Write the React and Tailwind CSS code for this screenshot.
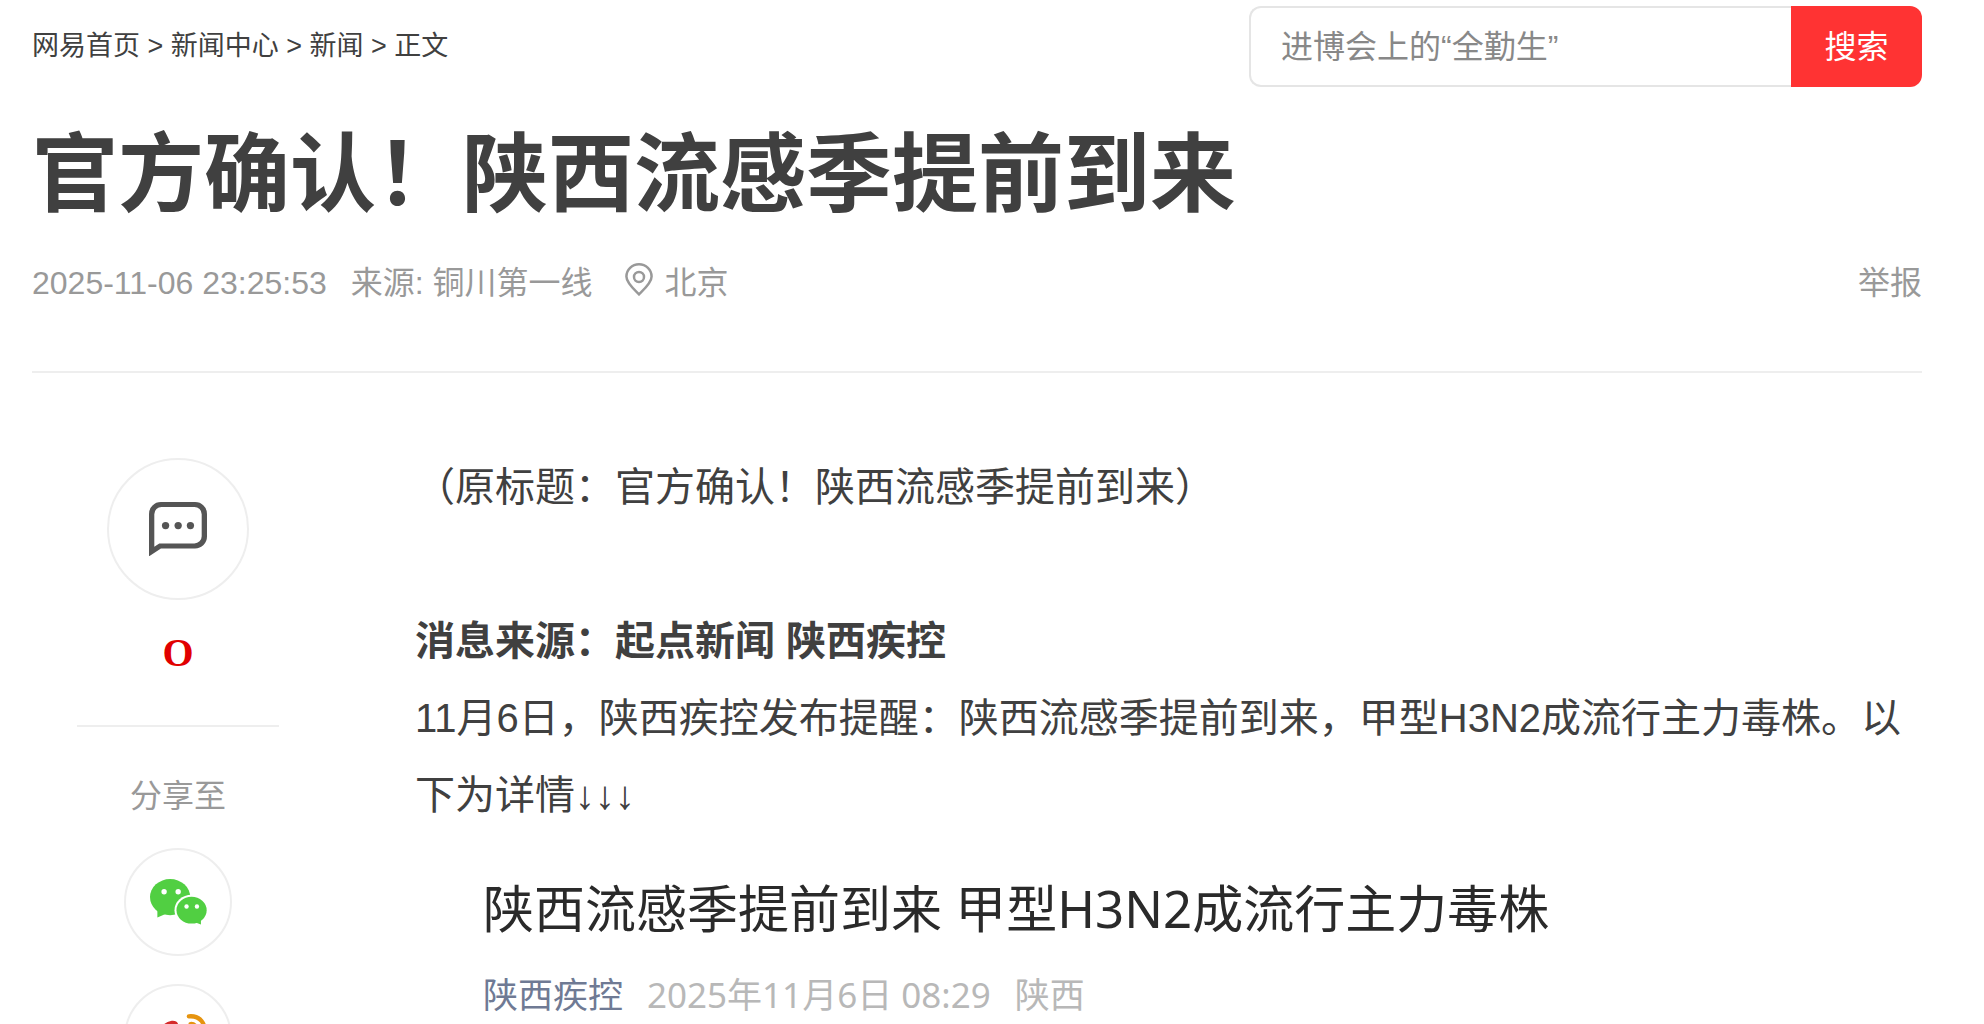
const crumbs = ["网易首页", "新闻中心", "新闻"];

function CommentIcon() {
  return (
    <svg viewBox="0 0 175 164" className="w-[58px]" fill="#555" aria-hidden="true">
      <path
        fillRule="evenodd"
        d="M0 164V36A36 36 0 0 1 36 0H139A36 36 0 0 1 175 36V104A36 36 0 0 1 139 140H36ZM16 135L31 125H137A22 22 0 0 0 159 103V37A22 22 0 0 0 137 15H38A22 22 0 0 0 16 37Z"
      />
      <circle cx="50" cy="71" r="11" />
      <circle cx="88" cy="71" r="11" />
      <circle cx="125" cy="71" r="11" />
    </svg>
  );
}

function WechatIcon() {
  return (
    <svg viewBox="0 0 170 136" className="w-[57px]" aria-hidden="true">
      <g fill="#51cf42">
        <ellipse cx="60" cy="54" rx="60" ry="54" />
        <path d="M22 88V115L48 104Z" />
      </g>
      <ellipse cx="124" cy="93" rx="51" ry="46" fill="#fff" />
      <g fill="#51cf42">
        <ellipse cx="124" cy="93" rx="45" ry="40" />
        <path d="M152 120V136L136 130Z" />
      </g>
      <g fill="#fff">
        <circle cx="42" cy="38" r="8" />
        <circle cx="84" cy="38" r="8" />
        <circle cx="109" cy="82" r="6.5" />
        <circle cx="140" cy="82" r="6.5" />
      </g>
    </svg>
  );
}

function WeiboIcon() {
  return (
    <svg viewBox="0 0 170 142" className="w-[57px]" aria-hidden="true">
      <path d="M84 46C88 28 80 18 62 21C36 27 2 62 2 92C2 122 36 140 72 140C116 140 146 114 146 92C146 76 132 68 122 64C128 44 112 36 84 46Z" fill="#d52b2b" />
      <ellipse cx="70" cy="94" rx="50" ry="34" fill="#fff" />
      <circle cx="64" cy="98" r="20" fill="#d52b2b" />
      <g fill="none" stroke="#e6940f" strokeWidth="13" strokeLinecap="round">
        <path d="M116 7C150 4 168 30 160 58" />
        <path d="M121 30C134 29 141 40 138 52" />
      </g>
    </svg>
  );
}

function PinIcon() {
  return (
    <svg viewBox="0 0 28 33" className="w-7" fill="none" stroke="#999" strokeWidth="2.5" aria-hidden="true">
      <path d="M14 31.4C9 26.5 1.4 20 1.4 13.6A12.6 12.3 0 0 1 26.6 13.6C26.6 20 19 26.5 14 31.4Z" />
      <circle cx="14" cy="14" r="5" />
    </svg>
  );
}

export default function App() {
  return (
    <div className="h-screen overflow-hidden bg-white pt-1.5 pr-[62px] pl-8 font-['Liberation_Sans','Noto_Sans_CJK_SC',sans-serif] text-[#404040]">
      <header className="flex items-start justify-between">
        <nav className="pt-5 text-[27px] leading-10">
          {crumbs.map((c) => (
            <span key={c}>
              <a href="#">{c}</a>
              {" > "}
            </span>
          ))}
          正文
        </nav>
        <form className="flex h-[81px]" onSubmit={(e) => e.preventDefault()}>
          <input
            type="text"
            aria-label="搜索新闻"
            placeholder="进博会上的“全勤生”"
            className="w-[542px] rounded-l-xl border-2 border-r-0 border-[#e5e5e5] px-[30px] text-[32px] outline-none placeholder:text-[#888]"
          />
          <button type="submit" className="w-[131px] rounded-r-xl bg-[#ff3333] text-[32px] text-white">
            搜索
          </button>
        </form>
      </header>

      <h1 className="mt-[38px] text-[86px] leading-[100px] font-bold whitespace-nowrap">官方确认！陕西流感季提前到来</h1>

      <div className="mt-[38px] flex items-start border-b-2 border-[#eee] pb-[68px] text-[32px] leading-10 text-[#999]">
        <span>2025-11-06 23:25:53</span>
        <span className="ml-6">
          来源: <a href="#">铜川第一线</a>
        </span>
        <span className="ml-8 flex items-start gap-3">
          <PinIcon />
          北京
        </span>
        <a href="#" className="ml-auto">
          举报
        </a>
      </div>

      <main className="flex pt-[76px]">
        <aside className="w-[383px] shrink-0 pt-[9px] pl-[45px]">
          <div className="flex w-[202px] flex-col items-center">
            <a href="#" aria-label="评论" className="flex size-[142px] items-center justify-center rounded-full border-2 border-[#eee]">
              <CommentIcon />
            </a>
            <a href="#" className="mt-[31px] font-['Liberation_Serif',serif] text-[40px] leading-[44px] font-bold text-[#e10000]">
              O
            </a>
            <div className="mt-[50px] w-full border-t-2 border-[#eee]" />
            <p className="mt-[49px] text-[32px] leading-10 text-[#999]">分享至</p>
            <a href="#" aria-label="微信" className="mt-8 flex size-[108px] items-center justify-center rounded-full border-2 border-[#eee]">
              <WechatIcon />
            </a>
            <a href="#" aria-label="微博" className="mt-7 flex size-[108px] items-center justify-center rounded-full border-2 border-[#eee]">
              <WeiboIcon />
            </a>
          </div>
        </aside>
        <article className="min-w-0 flex-1 text-[40px] leading-[77px]">
          <p>（原标题：官方确认！陕西流感季提前到来）</p>
          <p className="mt-[77px] font-bold">消息来源：起点新闻 陕西疾控</p>
          <p>11月6日，陕西疾控发布提醒：陕西流感季提前到来，甲型H3N2成流行主力毒株。以下为详情↓↓↓</p>
          <section className="mt-9 pl-[68px] font-['Noto_Sans','Noto_Sans_CJK_SC',sans-serif]">
            <h2 className="text-[51px] text-[#2a2a2a]">陕西流感季提前到来 甲型H3N2成流行主力毒株</h2>
            <p className="mt-3.5 flex gap-6 text-[35px] leading-[68px] text-[#b8b8b8]">
              <span className="text-[#6f7a94]">陕西疾控</span>
              <span>2025年11月6日 08:29</span>
              <span>陕西</span>
            </p>
          </section>
        </article>
      </main>
    </div>
  );
}
